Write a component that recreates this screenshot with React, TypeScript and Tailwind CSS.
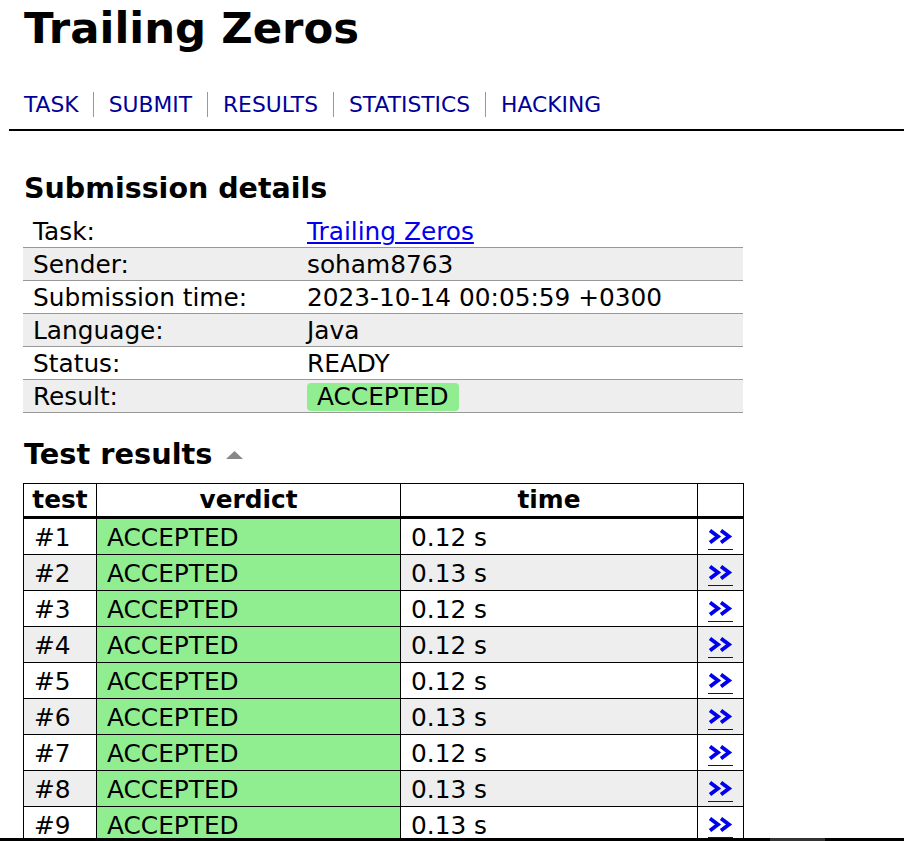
import React from 'react';

const navItems = ['TASK', 'SUBMIT', 'RESULTS', 'STATISTICS', 'HACKING'];

const details: [string, React.ReactNode][] = [
  ['Task:', <a href="#" className="text-[#0000ee] underline">Trailing Zeros</a>],
  ['Sender:', 'soham8763'],
  ['Submission time:', '2023-10-14 00:05:59 +0300'],
  ['Language:', 'Java'],
  ['Status:', 'READY'],
  [
    'Result:',
    <span className="inline-block rounded-[4px] bg-[#90ee90] px-[10px] leading-[28px]">ACCEPTED</span>,
  ],
];

const tests = [
  { id: 1, time: '0.12 s' },
  { id: 2, time: '0.13 s' },
  { id: 3, time: '0.12 s' },
  { id: 4, time: '0.12 s' },
  { id: 5, time: '0.12 s' },
  { id: 6, time: '0.13 s' },
  { id: 7, time: '0.12 s' },
  { id: 8, time: '0.13 s' },
  { id: 9, time: '0.13 s' },
];

function Arrows() {
  return (
    <a href="#" className="inline-block border-b border-[#0000ee] pb-[5px] align-middle">
      <svg width="25" height="15" viewBox="0 0 25 15" className="block">
        <polyline points="2,1.5 10,7.5 2,13.5" fill="none" stroke="#0000ee" strokeWidth="3.8" strokeLinejoin="miter" />
        <polyline points="13,1.5 21,7.5 13,13.5" fill="none" stroke="#0000ee" strokeWidth="3.8" strokeLinejoin="miter" />
      </svg>
    </a>
  );
}

export default function App() {
  return (
    <div className="min-h-screen bg-white text-black font-['DejaVu_Sans',Verdana,sans-serif]">
      <div className="px-[23px]">
        <h1 className="ml-[1px] pt-[4px] text-[43.4px] font-bold leading-[49px]">Trailing Zeros</h1>
        <nav className="ml-[1px] mt-[39px] flex text-[21.8px] leading-[25px] text-[#000099]">
          {navItems.map((item, i) => (
            <a
              key={item}
              href="#"
              className={i === 0 ? 'pr-[14px]' : 'border-l border-[#999] px-[15px]'}
            >
              {item}
            </a>
          ))}
        </nav>
      </div>
      <div className="ml-[9px] mt-[12px] h-[2px] bg-black" />

      <div className="px-[23px]">
        <h2 className="ml-[1px] mt-[41px] text-[28.5px] font-bold leading-[34px]">Submission details</h2>
        <table className="mt-[9px] w-[720px] table-fixed border-collapse text-[24.8px]">
          <colgroup>
            <col className="w-[274px]" />
            <col />
          </colgroup>
          <tbody>
            {details.map(([label, value], i) => (
              <tr key={label} className={`border-b border-[#999] ${i % 2 === 1 ? 'bg-[#eee]' : ''}`}>
                <td className="h-[32px] pl-[10px] pt-[3px] pb-[1px] leading-[28px]">{label}</td>
                <td className="h-[32px] pl-[10px] pt-[3px] pb-[1px] leading-[28px]">{value}</td>
              </tr>
            ))}
          </tbody>
        </table>

        <h2 className="ml-[1px] mt-[24px] flex items-center gap-[14px] text-[28.8px] font-bold leading-[34px]">
          Test results
          <svg width="17" height="8" viewBox="0 0 17 8" className="mt-[2px]">
            <polygon points="8.5,0 17,8 0,8" fill="#888" />
          </svg>
        </h2>

        <table className="mt-[12px] w-[720px] table-fixed border-collapse text-[24.8px]">
          <colgroup>
            <col className="w-[73px]" />
            <col className="w-[304px]" />
            <col className="w-[297px]" />
            <col className="w-[46px]" />
          </colgroup>
          <thead>
            <tr>
              <th className="border border-b-[3px] border-black pt-[2px] pb-[2px] text-center font-bold leading-[28px]">test</th>
              <th className="border border-b-[3px] border-black pt-[2px] pb-[2px] text-center font-bold leading-[28px]">verdict</th>
              <th className="border border-b-[3px] border-black pt-[2px] pb-[2px] text-center font-bold leading-[28px]">time</th>
              <th className="border border-b-[3px] border-black" />
            </tr>
          </thead>
          <tbody>
            {tests.map((t, i) => (
              <tr key={t.id} className={i % 2 === 1 ? 'bg-[#eee]' : ''}>
                <td className="border border-black pl-[10px] pt-[5px] pb-[2px] leading-[28px]">#{t.id}</td>
                <td className="border border-black bg-[#90ee90] pl-[10px] pt-[5px] pb-[2px] leading-[28px]">ACCEPTED</td>
                <td className="border border-black pl-[10px] pt-[5px] pb-[2px] leading-[28px]">{t.time}</td>
                <td className="border border-black pt-[5px] pb-[2px] text-center leading-[28px]">
                  <Arrows />
                </td>
              </tr>
            ))}
          </tbody>
        </table>
      </div>

      <div className="fixed bottom-0 left-0 right-0 flex h-[3px] bg-black">
        <div className="ml-[770px] h-full w-[55px] bg-[#333]" />
      </div>
    </div>
  );
}
